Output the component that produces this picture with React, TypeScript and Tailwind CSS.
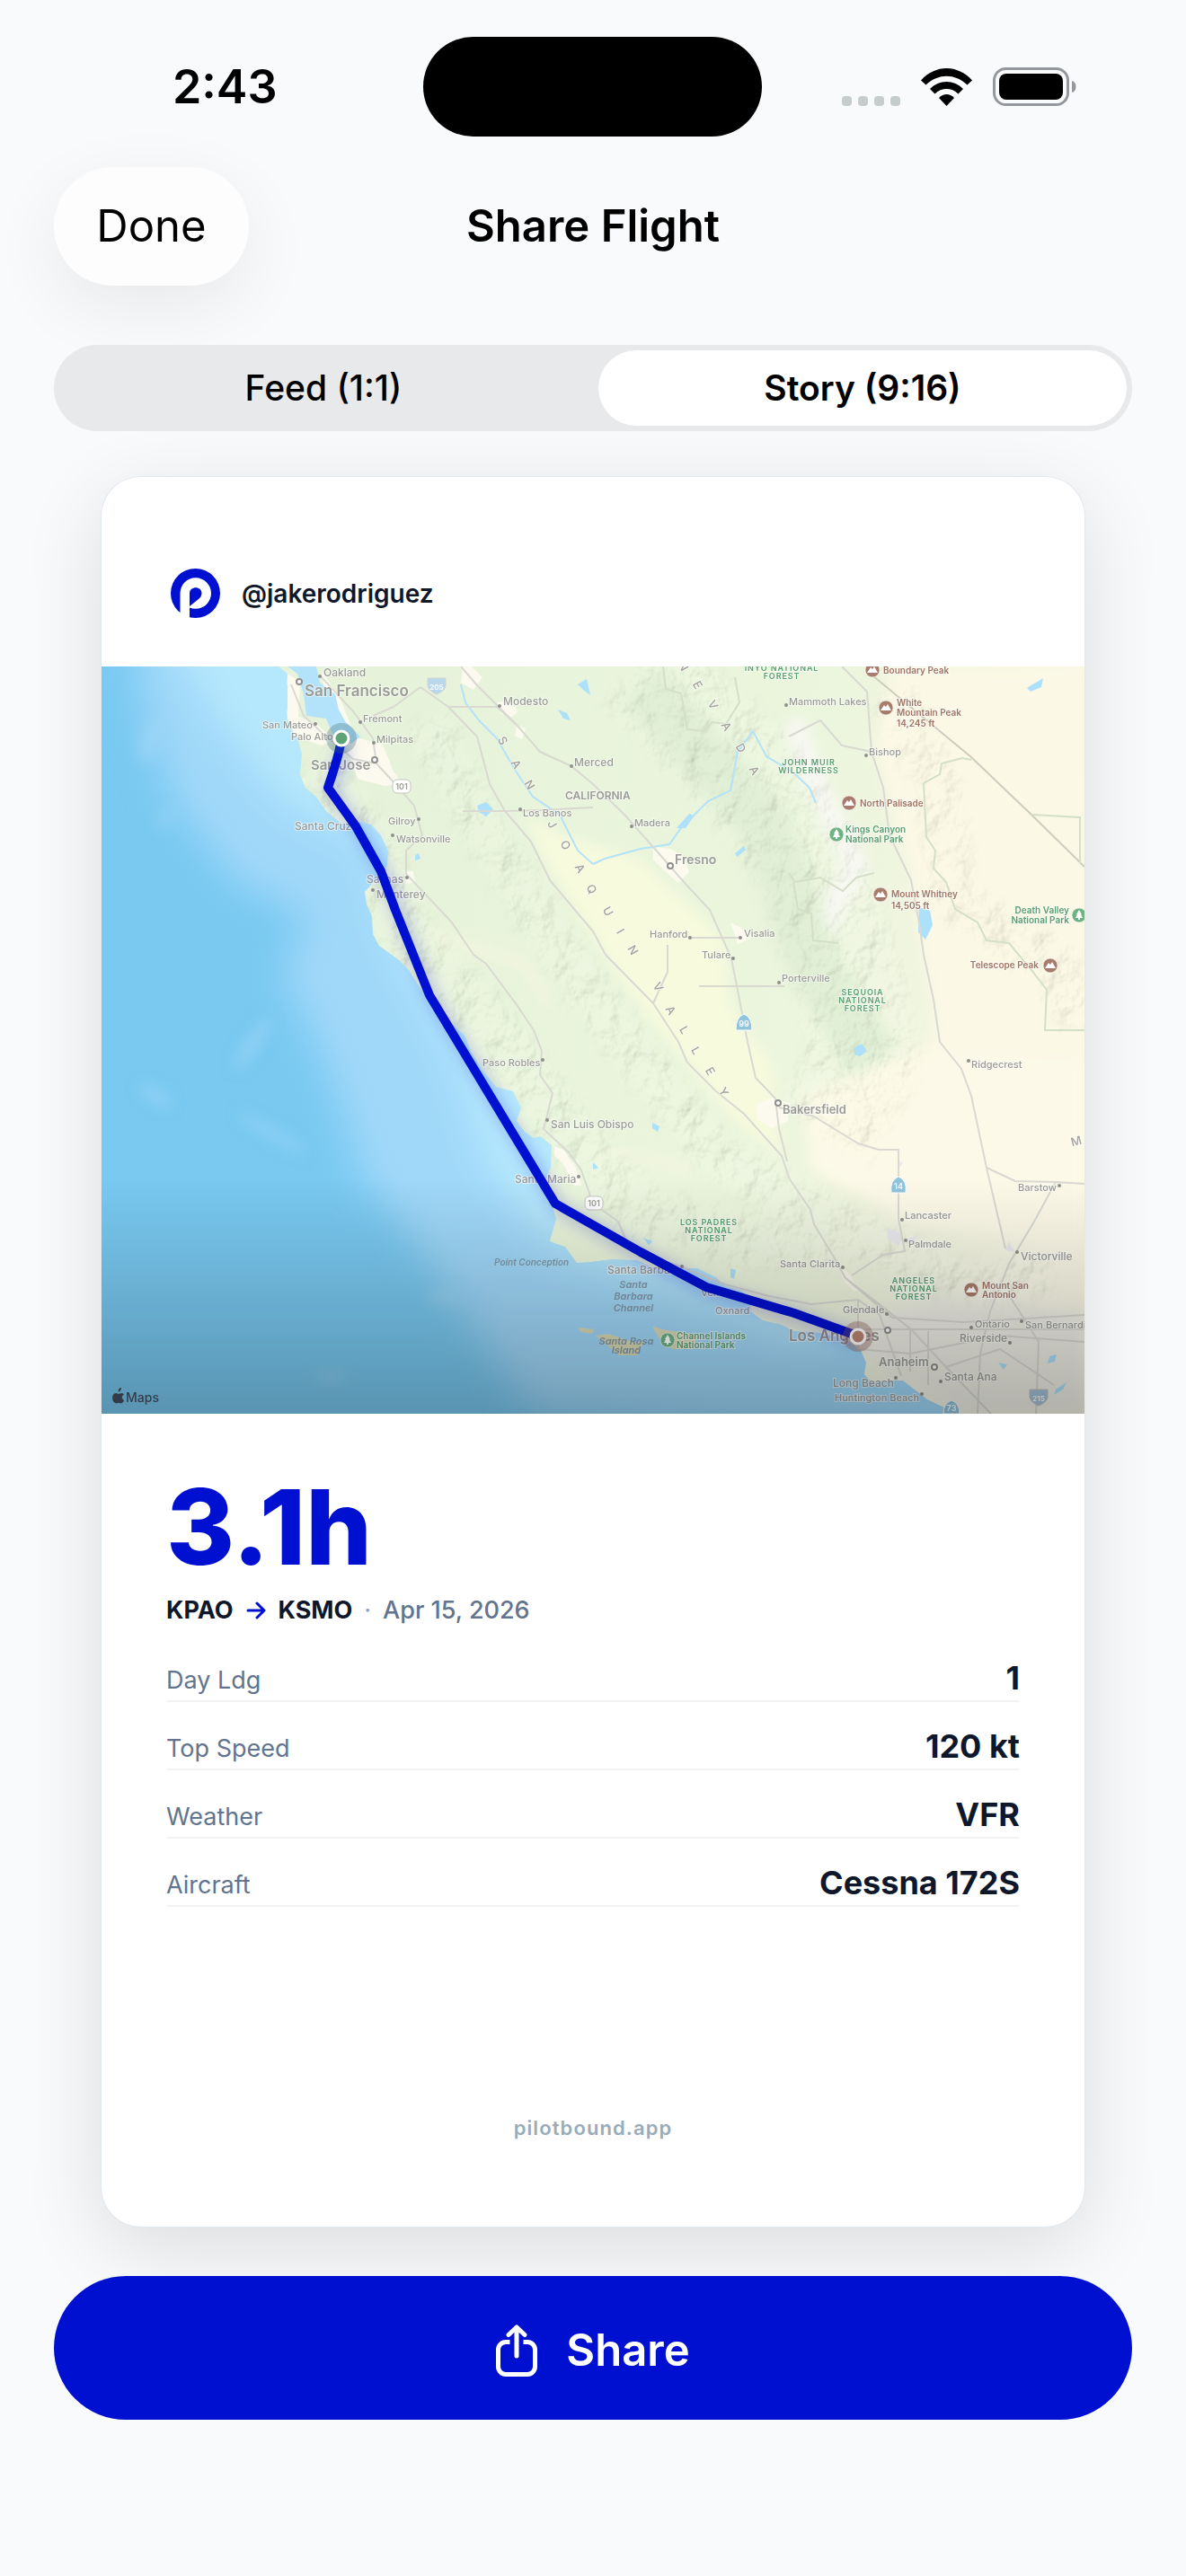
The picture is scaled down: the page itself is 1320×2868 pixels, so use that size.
import { FC, useState } from "react";

type LabelTone = "city" | "peak" | "park" | "sea";

type MapLabel = {
  text: string;
  x: number;
  y: number;
  size?: number;
  weight?: number;
  tone?: LabelTone;
  anchor?: "start" | "middle" | "end";
};

const COAST =
  "M197 0L207 8 206 18 211 31 206 51 207 61 216 71 223 98 221 121 227 135 239 145 250 161 267 175 288 173 300 176 311 188 319 205 318 221 313 231 302 241 293 251 295 265 301 278 302 298 309 311 330 326 342 338 355 358 369 375 383 391 404 411 411 428 423 448 439 468 458 473 467 491 462 506 471 518 481 525 488 523 501 533 500 558 495 571 499 591 506 615 499 640 516 646 529 664 544 663 568 660 596 661 617 671 642 670 663 670 684 680 694 690 712 695 724 705 722 718 736 728 757 733 771 740 793 741 817 746 831 751 845 761 851 775 849 788 856 796 873 795 892 795 905 805 919 816 940 826 950 832H1094V0Z";

const ROUTE =
  "M267 80C265 98 258 116 252 135L283 178 311 228 327 271 365 366 505 598 600 652 673 691 771 720 835 743 842 746";

const ROADS = [
  "M355 23L386 45 418 78 432 131 449 161 478 195 499 238 547 295 561 321 614 375 642 418 652 441 684 473 715 498 757 545 766 571 789 605 793 621 817 661 828 681 863 708 901 738 940 780 990 832",
  "M400 0L418 21 462 65 488 95 523 111 547 131 582 165 614 201 649 241 677 271 701 325 712 381 719 418 728 458 750 481 754 515 763 551",
  "M211 20L225 55 250 78 280 103 306 108 327 131 348 155 357 188 339 205 339 231 390 285 414 321 428 331 463 378 481 405 490 428 488 455 502 475 492 515 520 541 534 561 547 598 575 618 589 651 645 668 694 688 743 701 790 710 842 705 866 722",
  "M243 10L280 50 302 80 306 108M302 55L325 45 355 23M386 45H440L462 65M402 161H449L490 160 547 157",
  "M824 0L852 28 857 95 870 135 877 188 901 238 910 285 915 321 926 371 933 418 957 448 968 478 985 558 1006 648",
  "M754 491L793 501 842 531 865 538 887 538 887 615 894 651 870 655 835 678",
  "M1094 576L1062 574 1056 585 1038 618 1010 665 989 718 978 765 975 832M985 558L1017 573 1062 574",
  "M828 681L880 725 960 730 1094 722M842 705V760L900 765 1000 745 1094 752M866 722L890 790M900 738V785M920 740V800M850 738L1094 738M1010 700L1043 752 1040 832M940 780L1000 760 1060 800M765 78L800 60 824 88 857 95",
  "M657 302H712M719 356H760M665 356H719M630 310V340L614 375",
];

const LAKES = [
  "M910 268l12 4 3 16-8 16-8-8z",
  "M1040 18l8-5-2 10-12 5-4-4 6-4z",
  "M530 20l10-6 4 18-8-6z",
  "M418 155l10-4 8 8-8 8-8-5z",
  "M508 48l10 4 4 8-8-2z",
  "M640 180l14-16 6 2-10 14z",
  "M705 208l10-8 2 4-10 8z",
  "M838 424l8-4 6 8-8 6-6-2z",
  "M613 508l8 4-2 6-6-4z",
  "M349 210l4-2 2 6-6 2z",
  "M547 552l6 6-6 2zM700 670l6 2-2 10-4-2z",
  "M603 636l10 4-4 4zM998 775l10 2-4 6zM1055 768l8-2-2 8-8 2z",
  "M1062 805l12-8-4 8-10 6z",
];

const SPACED_LETTERS: [string, number, number, number][] = [
  ["S", 446, 83, 60],
  ["A", 461, 109, 60],
  ["N", 476, 132, 60],
  ["J", 501, 176, 60],
  ["O", 516, 199, 60],
  ["A", 532, 225, 60],
  ["Q", 545, 248, 60],
  ["U", 563, 273, 60],
  ["I", 577, 295, 60],
  ["N", 591, 316, 60],
  ["V", 619, 357, 60],
  ["A", 633, 383, 60],
  ["L", 648, 405, 60],
  ["L", 661, 428, 60],
  ["E", 677, 451, 60],
  ["Y", 692, 474, 60],
  ["N", 647, 0, 60],
  ["E", 663, 21, 60],
  ["V", 680, 43, 60],
  ["A", 695, 67, 60],
  ["D", 711, 91, 60],
  ["A", 726, 116, 60],
  ["M", 1085, 529, -15],
];

const LABELS: MapLabel[] = [
  { text: "Oakland", x: 247, y: 11 },
  { text: "San Francisco", x: 226, y: 33, size: 17, weight: 600 },
  { text: "Fremont", x: 291, y: 62, size: 11 },
  { text: "San Mateo", x: 179, y: 69, size: 11 },
  { text: "Palo Alto", x: 211, y: 82, size: 11 },
  { text: "Milpitas", x: 306, y: 85, size: 11 },
  { text: "San Jose", x: 233, y: 115, size: 15, weight: 600 },
  { text: "Modesto", x: 447, y: 43 },
  { text: "Merced", x: 526, y: 111 },
  { text: "Gilroy", x: 319, y: 176, size: 11 },
  { text: "Los Banos", x: 469, y: 167, size: 11 },
  { text: "Santa Cruz", x: 215, y: 182 },
  { text: "Watsonville", x: 328, y: 196, size: 11 },
  { text: "Salinas", x: 295, y: 241 },
  { text: "Monterey", x: 306, y: 258 },
  { text: "CALIFORNIA", x: 516, y: 148, weight: 600 },
  { text: "Madera", x: 593, y: 178, size: 11 },
  { text: "Fresno", x: 638, y: 220, size: 14, weight: 600 },
  { text: "Hanford", x: 610, y: 302, size: 11 },
  { text: "Visalia", x: 715, y: 301, size: 11 },
  { text: "Tulare", x: 668, y: 325, size: 11 },
  { text: "Porterville", x: 757, y: 351, size: 11 },
  { text: "Mammoth Lakes", x: 765, y: 43, size: 11 },
  { text: "Bishop", x: 854, y: 99, size: 11 },
  { text: "INYO NATIONAL", x: 757, y: 5, size: 9, tone: "park", anchor: "middle" },
  { text: "FOREST", x: 757, y: 14, size: 9, tone: "park", anchor: "middle" },
  { text: "JOHN MUIR", x: 787, y: 110, size: 9, tone: "park", anchor: "middle" },
  { text: "WILDERNESS", x: 787, y: 119, size: 9, tone: "park", anchor: "middle" },
  { text: "Boundary Peak", x: 870, y: 8, size: 10, tone: "peak" },
  { text: "White", x: 885, y: 44, size: 10, tone: "peak" },
  { text: "Mountain Peak", x: 885, y: 55, size: 10, tone: "peak" },
  { text: "14,245 ft", x: 885, y: 67, size: 10, tone: "peak" },
  { text: "North Palisade", x: 844, y: 156, size: 10, tone: "peak" },
  { text: "Kings Canyon", x: 828, y: 185, size: 10, tone: "park" },
  { text: "National Park", x: 828, y: 196, size: 10, tone: "park" },
  { text: "Mount Whitney", x: 879, y: 257, size: 10, tone: "peak" },
  { text: "14,505 ft", x: 879, y: 270, size: 10, tone: "peak" },
  { text: "Death Valley", x: 1077, y: 275, size: 10, tone: "park", anchor: "end" },
  { text: "National Park", x: 1077, y: 286, size: 10, tone: "park", anchor: "end" },
  { text: "Telescope Peak", x: 1043, y: 336, size: 10, tone: "peak", anchor: "end" },
  { text: "SEQUOIA", x: 847, y: 366, size: 9, tone: "park", anchor: "middle" },
  { text: "NATIONAL", x: 847, y: 375, size: 9, tone: "park", anchor: "middle" },
  { text: "FOREST", x: 847, y: 384, size: 9, tone: "park", anchor: "middle" },
  { text: "Paso Robles", x: 424, y: 445, size: 11 },
  { text: "San Luis Obispo", x: 500, y: 514, size: 12 },
  { text: "Santa Maria", x: 460, y: 575 },
  { text: "Bakersfield", x: 758, y: 498, size: 13, weight: 600 },
  { text: "Ridgecrest", x: 968, y: 447, size: 11 },
  { text: "Barstow", x: 1020, y: 584, size: 11 },
  { text: "Lancaster", x: 894, y: 615, size: 11 },
  { text: "Palmdale", x: 898, y: 647, size: 11 },
  { text: "Victorville", x: 1023, y: 661 },
  { text: "Santa Clarita", x: 755, y: 669, size: 11 },
  { text: "LOS PADRES", x: 676, y: 622, size: 9, tone: "park", anchor: "middle" },
  { text: "NATIONAL", x: 676, y: 631, size: 9, tone: "park", anchor: "middle" },
  { text: "FOREST", x: 676, y: 640, size: 9, tone: "park", anchor: "middle" },
  { text: "Santa Barbara", x: 563, y: 676 },
  { text: "Ventura", x: 667, y: 701, size: 11 },
  { text: "Oxnard", x: 683, y: 721, size: 11 },
  { text: "Point Conception", x: 437, y: 667, size: 10, tone: "sea" },
  { text: "Santa", x: 592, y: 692, size: 11, tone: "sea", anchor: "middle" },
  { text: "Barbara", x: 592, y: 705, size: 11, tone: "sea", anchor: "middle" },
  { text: "Channel", x: 592, y: 718, size: 11, tone: "sea", anchor: "middle" },
  { text: "Santa Rosa", x: 584, y: 755, size: 11, tone: "sea", anchor: "middle" },
  { text: "Island", x: 584, y: 765, size: 11, tone: "sea", anchor: "middle" },
  { text: "Channel Islands", x: 640, y: 749, size: 10, tone: "park" },
  { text: "National Park", x: 640, y: 759, size: 10, tone: "park" },
  { text: "Los Angeles", x: 765, y: 751, size: 17, weight: 600 },
  { text: "Glendale", x: 825, y: 720, size: 11 },
  { text: "ANGELES", x: 904, y: 687, size: 9, tone: "park", anchor: "middle" },
  { text: "NATIONAL", x: 904, y: 696, size: 9, tone: "park", anchor: "middle" },
  { text: "FOREST", x: 904, y: 705, size: 9, tone: "park", anchor: "middle" },
  { text: "Mount San", x: 980, y: 693, size: 10, tone: "peak" },
  { text: "Antonio", x: 980, y: 703, size: 10, tone: "peak" },
  { text: "Ontario", x: 972, y: 736, size: 11 },
  { text: "San Bernardino", x: 1028, y: 737, size: 11 },
  { text: "Riverside", x: 955, y: 752 },
  { text: "Anaheim", x: 865, y: 779, size: 13, weight: 600 },
  { text: "Santa Ana", x: 938, y: 795 },
  { text: "Long Beach", x: 814, y: 802 },
  { text: "Huntington Beach", x: 816, y: 818, size: 11 },
];

const TOWN_DOTS: [number, number][] = [
  [243, 11],
  [288, 62],
  [238, 64],
  [303, 85],
  [443, 44],
  [353, 170],
  [324, 188],
  [340, 235],
  [302, 249],
  [466, 159],
  [523, 111],
  [590, 178],
  [655, 302],
  [711, 302],
  [703, 325],
  [754, 352],
  [762, 43],
  [851, 99],
  [491, 438],
  [496, 505],
  [531, 568],
  [965, 439],
  [1066, 578],
  [891, 616],
  [895, 639],
  [1019, 652],
  [825, 669],
  [646, 668],
  [874, 721],
  [968, 736],
  [1024, 729],
  [1011, 753],
  [934, 796],
  [884, 792],
  [913, 810],
];

const CITY_RINGS: [number, number][] = [
  [220, 17],
  [304, 104],
  [633, 222],
  [753, 486],
  [875, 739],
  [927, 780],
];

const PEAKS: [number, number][] = [
  [858, 4],
  [873, 46],
  [832, 152],
  [867, 254],
  [1056, 333],
  [968, 694],
];

const PARKS: [number, number][] = [
  [818, 187],
  [1088, 277],
  [630, 750],
];

const TONE_FILL: Record<LabelTone, string> = {
  city: "#9b9b96",
  peak: "#a17565",
  park: "#57a070",
  sea: "#8297a8",
};

const FlightMap: FC = () => (
  <svg
    viewBox="0 0 1094 832"
    className="block w-full"
    role="img"
    aria-label="Flight track from Palo Alto to Santa Monica"
  >
    <defs>
      <linearGradient id="shade" x1="0" y1="570" x2="0" y2="832" gradientUnits="userSpaceOnUse">
        <stop offset="0" stopColor="#000" stopOpacity="0" />
        <stop offset="1" stopColor="#000" stopOpacity="0.26" />
      </linearGradient>
      <linearGradient id="land" x1="300" y1="300" x2="1094" y2="420" gradientUnits="userSpaceOnUse">
        <stop offset="0" stopColor="#e6f3da" />
        <stop offset="0.5" stopColor="#eaf5dc" />
        <stop offset="0.72" stopColor="#eff5df" />
        <stop offset="1" stopColor="#faf8e7" />
      </linearGradient>
      <filter id="blurL" x="-30%" y="-30%" width="160%" height="160%">
        <feGaussianBlur stdDeviation="22" />
      </filter>
      <filter id="blurS" x="-30%" y="-30%" width="160%" height="160%">
        <feGaussianBlur stdDeviation="8" />
      </filter>
      <filter id="relief" x="0" y="0" width="100%" height="100%">
        <feTurbulence type="fractalNoise" baseFrequency="0.035 0.028" numOctaves="4" seed="7" />
        <feColorMatrix values="0 0 0 0 0 0 0 0 0 0 0 0 0 0 0 1 0 0 0 0" />
        <feDiffuseLighting surfaceScale="12" diffuseConstant="1.2" lightingColor="#f6fff0">
          <feDistantLight azimuth="225" elevation="55" />
        </feDiffuseLighting>
      </filter>
      <clipPath id="landClip">
        <path d={COAST} />
      </clipPath>
      <mask id="hills">
        <g filter="url(#blurS)" fill="none" stroke="#fff" strokeLinejoin="round">
          <path d="M235 110L300 210 340 300 440 410 520 520 600 610 720 640 830 640" strokeWidth="60" />
          <path d="M360 60L430 190 520 330 590 430 680 540 780 600 960 690 1060 680" strokeWidth="50" />
          <path d="M600 0L720 120 790 220 830 340 850 440 800 520" strokeWidth="120" />
          <path d="M880 30L930 130 950 260 1060 330 1094 400" strokeWidth="50" />
        </g>
      </mask>
    </defs>

    <rect width="1094" height="832" fill="#79c9f1" />
    <g filter="url(#blurL)">
      <path
        d="M30 -60L50 60 80 150 150 240 230 280 200 340 240 420 270 500 290 570 350 640 390 700 480 832 1000 870V-60Z"
        fill="#a0d8f9"
      />
      <path
        d="M60 -60L130 60 200 150 300 200 320 300 390 430 430 560 500 650 700 720 800 760V-60Z"
        fill="#b6e8fd"
      />
    </g>
    <g filter="url(#blurS)" fill="#9dd6f6" fillOpacity="0.7">
      <ellipse cx="56" cy="80" rx="12" ry="28" transform="rotate(20 56 80)" />
      <ellipse cx="72" cy="168" rx="6" ry="14" transform="rotate(30 72 168)" />
      <ellipse cx="168" cy="420" rx="7" ry="34" transform="rotate(35 168 420)" />
      <ellipse cx="60" cy="478" rx="20" ry="7" transform="rotate(30 60 478)" />
      <ellipse cx="190" cy="520" rx="44" ry="5" transform="rotate(30 190 520)" />
      <ellipse cx="385" cy="702" rx="22" ry="7" />
      <ellipse cx="255" cy="792" rx="18" ry="5" />
    </g>

    <path d={COAST} fill="url(#land)" />
    <g clipPath="url(#landClip)">
      <g filter="url(#blurS)">
        <path d="M470 165L520 190 600 215 690 300 700 380 745 440 755 545 700 500 600 380 540 290 490 210Z" fill="#f7fadd" />
        <path d="M860 90L900 230 930 400 880 500 900 560 1094 600V0H880Z" fill="#fbf8e6" />
        <path d="M780 480L900 430 1094 440V650L900 620 790 560Z" fill="#fcf9e8" />
        <path d="M770 60L800 140 840 220 800 300" stroke="#f8f8f3" strokeWidth="24" fill="none" />
        <path d="M600 20L740 180 790 330 860 440" stroke="#e1efd6" strokeWidth="60" fill="none" />
        <path d="M370 300L470 330 500 380M560 540L660 560" stroke="#f3f5de" strokeWidth="14" fill="none" />
        <path d="M820 740L880 790 960 832H1094V720L930 700Z" fill="#efefe6" />
      </g>
      <g mask="url(#hills)" className="opacity-15 mix-blend-multiply">
        <rect width="1094" height="832" filter="url(#relief)" />
      </g>
    </g>
    <g fill="#fcfaee">
      <path d="M207 8l14 8-2 40 20 8 20 18-14 6-30-10-8-20zM245 5l20 30 18 44 30 8 12 30 10 14-20 2-30-8-10-30-25-50z" />
      <path d="M614 201l20 2 14 10 6 16-12 12-16-14-12-12zM728 488l18-8 20 6-2 20-18 8-16-10zM402 0h10l12 12-10 14-14-8zM440 40l14-2 10 12-10 8-10-6zM462 65l10 4-4 12-8-4z" />
      <path d="M337 228l10 0 2 12-10 2zM504 534l10 4 14 20 6 20-8 0-12-24-10-10zM822 670l8 4 14 20-6 2-12-12zM700 285l12 6 10 12-14 6z" />
    </g>
    <g fill="#e9e9ef">
      <path d="M874 625l16 6-2 14-12-6zM894 638l14-4-6 10zM886 549l6 4-4 5zM1010 640l6 12-10-2z" />
    </g>
    <path
      d="M225 31L218 8 207 0H239L243 18 260 31 264 48 271 61 288 78 278 86 257 75 250 58 228 55Z"
      fill="#b3e3fb"
    />
    <path
      d="M530 736l18 2-2 5-12-2zM613 734l10 4 40 6-4 16-24 0-16-14zM550 745l14-2 30 10 10-2-8 16-20 0z"
      fill="#d8d9b4"
    />
    {LAKES.map((d) => (
      <path key={d} d={d} fill="#ace0fb" />
    ))}
    <path
      d="M547 220L560 214 600 203 632 198 645 180 675 150 700 138 708 95 725 72 740 100 770 118 788 135 795 152M400 20L405 40 420 60 440 80 460 115 480 145 510 165 530 205 547 220"
      fill="none"
      stroke="#b4e2f8"
      strokeWidth="2"
    />
    <g fill="none" stroke="#d9d9d2" strokeWidth="2" strokeLinejoin="round">
      {ROADS.map((d) => (
        <path key={d} d={d} />
      ))}
    </g>
    <path d="M852 5L968 101 1035 165 1094 223" fill="none" stroke="#cdcdbf" strokeWidth="2" />
    <path
      d="M915 130L933 120 935 108 958 102 968 104M915 130L918 190 928 205 926 225 940 240 950 270 975 285 985 305 1010 308 1035 338 1052 360 1050 405H1094M1035 165L1089 168V220M625 0L628 25 645 30 652 70 670 72 680 62 695 64 710 40 705 12M765 230L772 240 800 235 825 250 840 235 860 230M770 240L775 270 790 275 792 305 820 308"
      fill="none"
      stroke="#d3dfc8"
      strokeWidth="2"
    />

    <g fill="#8f8f8b">
      {TOWN_DOTS.map(([x, y]) => (
        <circle key={`${x}-${y}`} cx={x} cy={y} r="2" />
      ))}
    </g>
    <g fill="#fff" stroke="#8f8f8b" strokeWidth="2">
      {CITY_RINGS.map(([x, y]) => (
        <circle key={`${x}-${y}`} cx={x} cy={y} r="3" />
      ))}
    </g>

    <g fontFamily="Inter, sans-serif" stroke="#fff" strokeOpacity="0.55" strokeWidth="2" paintOrder="stroke">
      {LABELS.map((l) => {
        const tone = l.tone ?? "city";
        return (
          <text
            key={`${l.text}-${l.x}-${l.y}`}
            x={l.x}
            y={l.y}
            fontSize={l.size ?? 12}
            fontWeight={l.weight ?? (tone === "city" ? 500 : 600)}
            fontStyle={tone === "sea" ? "italic" : "normal"}
            textAnchor={l.anchor ?? "start"}
            fill={TONE_FILL[tone]}
            strokeOpacity={tone === "sea" ? 0 : 0.55}
            className={l.size === 9 ? "tracking-widest" : undefined}
          >
            {l.text}
          </text>
        );
      })}
      {SPACED_LETTERS.map(([ch, x, y, angle]) => (
        <text
          key={`${ch}-${x}`}
          fontSize="13"
          fontWeight="500"
          fill="#a3a39c"
          textAnchor="middle"
          transform={`translate(${x} ${y}) rotate(${angle}) translate(0 4)`}
        >
          {ch}
        </text>
      ))}
    </g>

    {PEAKS.map(([x, y]) => (
      <g key={`${x}-${y}`} transform={`translate(${x} ${y})`}>
        <circle r="8" fill="#a87c6c" stroke="#fff" strokeOpacity="0.6" />
        <path d="M-6 3L-2 -3 0 -1 2 -4 6 3Z" fill="#fff" />
      </g>
    ))}
    {PARKS.map(([x, y]) => (
      <g key={`${x}-${y}`} transform={`translate(${x} ${y})`}>
        <circle r="8" fill="#6db384" stroke="#fff" strokeOpacity="0.6" />
        <path d="M0 -6L3 -1H2L4 3H1V5H-1V3H-4L-2 -1H-3Z" fill="#fff" />
      </g>
    ))}

    <g fontFamily="Inter, sans-serif" fontWeight="600" fontSize="9" textAnchor="middle">
      <rect x="324" y="126" width="20" height="15" rx="5" fill="#fff" stroke="#c4c4bf" />
      <text x="334" y="137" fill="#9b9b96">101</text>
      <rect x="538" y="590" width="20" height="15" rx="5" fill="#fff" stroke="#c4c4bf" />
      <text x="548" y="601" fill="#9b9b96">101</text>
      <path d="M363 13H383V22Q381 28 373 31 365 28 363 22Z" fill="#b9d8ee" stroke="#d4d4cf" />
      <text x="373" y="26" fontSize="8" fill="#fff">205</text>
      <path d="M706 405Q706 390 715 387 724 390 724 405Z" fill="#8fc4dc" stroke="#fff" />
      <text x="715" y="401" fill="#fff">99</text>
      <path d="M879 586Q877 572 887 568 897 572 895 586Z" fill="#8fc4dc" stroke="#fff" />
      <text x="887" y="582" fill="#fff">14</text>
      <path d="M1033 805H1053V814Q1051 820 1043 823 1035 820 1033 814Z" fill="#a3c1d8" stroke="#c4c4bf" />
      <text x="1043" y="818" fontSize="8" fill="#fff">215</text>
      <path d="M937 832Q937 820 946 817 955 820 955 832Z" fill="#8fc4dc" stroke="#fff" />
      <text x="946" y="829" fill="#fff">73</text>
    </g>

    <path
      d={ROUTE}
      fill="none"
      stroke="#0010d0"
      strokeOpacity="0.22"
      strokeWidth="14"
      filter="url(#blurS)"
      transform="translate(4 4)"
    />
    <path d={ROUTE} fill="none" stroke="#0010d0" strokeWidth="10" strokeLinejoin="round" />
    <circle cx="267" cy="80" r="17" fill="#3c6a70" fillOpacity="0.3" />
    <circle cx="267" cy="80" r="8" fill="#5fa275" stroke="#fff" strokeWidth="3" />
    <circle cx="842" cy="746" r="17" fill="#8d5a50" fillOpacity="0.35" />
    <circle cx="842" cy="746" r="8" fill="#bb8572" stroke="#fff" strokeWidth="3" />

    <rect width="1094" height="832" fill="url(#shade)" />
    <path
      d="M19 808c1-1 3-2 3-5-2 0-4 2-3 5zm4 1c-2 0-3 1-4 1s-2-1-3-1c-5 0-5 9-1 11 1 1 3 0 4 0s3 1 4 0 2-2 2-3c-3-2-3-5 0-6-1-1-1-2-2-2z"
      fill="#333a48"
    />
    <text x="27" y="819" fontFamily="Inter, sans-serif" fontSize="14" fontWeight="500" fill="#333a48">
      Maps
    </text>
  </svg>
);

const StatusBar: FC = () => (
  <div className="flex items-center pt-[41px]">
    <div className="flex flex-1 justify-center pl-[30px] text-[52px] leading-[60px] font-semibold">
      2:43
    </div>
    <div className="h-[111px] w-[377px] rounded-full bg-black" />
    <div className="flex flex-1 items-center justify-center pr-[32px]">
      <div className="flex h-[42px] items-end gap-[7px]">
        <span className="size-[11px] rounded-[4px] bg-[#c5cccb]" />
        <span className="size-[11px] rounded-[4px] bg-[#c5cccb]" />
        <span className="size-[11px] rounded-[4px] bg-[#c5cccb]" />
        <span className="size-[11px] rounded-[4px] bg-[#c5cccb]" />
      </div>
      <svg viewBox="0 0 57 42" className="ml-[23px] h-[42px] w-[57px]" aria-hidden="true">
        <path d="M0 13.5C16-4.5 41-4.5 57 13.5L51.5 18.5C38 5.4 19 5.4 5.5 18.5Z" />
        <path d="M10 23C20 12.3 37 12.3 47 23L41.5 28.5C34 21.2 23 21.2 15.5 28.5Z" />
        <path d="M20 33C25 27.7 32 27.7 37 33L28.5 42Z" />
      </svg>
      <svg viewBox="0 0 94 43" className="ml-[23px] h-[43px] w-[94px]" aria-hidden="true">
        <rect x="1.5" y="1.5" width="82" height="40" rx="13" fill="none" stroke="#94979c" strokeWidth="3" />
        <rect x="7" y="7" width="71" height="29" rx="8" />
        <path d="M88 15c6 1 6 12 0 13z" fill="#94979c" />
      </svg>
    </div>
  </div>
);

const Logo: FC = () => (
  <svg viewBox="0 0 55 55" className="size-[55px]" aria-hidden="true">
    <circle cx="27.5" cy="27.5" r="27.5" fill="#0010d0" />
    <path d="M10.5 55V27.5A17.25 17.25 0 1 1 27.5 44.8Q24 44.8 21 43.5V55Z" fill="#fff" />
    <path d="M21 27.5C21 19 34.5 19 34.5 27.5 34.5 30 33 32.5 31 34L21 42Z" fill="#0010d0" />
  </svg>
);

const stats = [
  { label: "Day Ldg", value: "1" },
  { label: "Top Speed", value: "120 kt" },
  { label: "Weather", value: "VFR" },
  { label: "Aircraft", value: "Cessna 172S" },
];

const formats = [
  { id: "feed", label: "Feed (1:1)" },
  { id: "story", label: "Story (9:16)" },
];

const App: FC = () => {
  const [format, setFormat] = useState("story");

  return (
    <div className="min-h-screen bg-[#f9fafc] pb-[174px] font-['Inter',sans-serif] text-black">
      <StatusBar />

      <header className="mt-[34px] grid grid-cols-3 items-center px-[60px]">
        <button
          type="button"
          className="h-[132px] w-[217px] rounded-full bg-[#fdfdfe] text-[49px] shadow-[0_24px_80px_rgba(0,0,0,0.07)]"
        >
          Done
        </button>
        <h1 className="text-center text-[49px] font-semibold whitespace-nowrap">Share Flight</h1>
      </header>

      <div className="relative mx-[60px] mt-[66px] grid grid-cols-2 gap-[12px] rounded-full bg-[#e8e9ea] p-[6px]">
        {formats.map((f) => (
          <button
            key={f.id}
            type="button"
            aria-pressed={format === f.id}
            onClick={() => setFormat(f.id)}
            className={
              format === f.id
                ? "h-[84px] rounded-full bg-white text-[39px] font-semibold"
                : "h-[84px] rounded-full text-[39px] font-medium"
            }
          >
            {f.label}
          </button>
        ))}
      </div>

      <main className="mx-[113px] mt-[51px] overflow-hidden rounded-[44px] bg-white shadow-[0_24px_90px_rgba(0,0,0,0.12)] ring-1 ring-slate-200">
        <div className="flex items-center gap-6 px-[77px] pt-[102px] pb-[54px]">
          <Logo />
          <span className="text-[28px] font-semibold text-slate-900">@jakerodriguez</span>
        </div>

        <FlightMap />

        <div className="px-[72px] pt-[68px] pb-[94px]">
          <p className="text-[116px] leading-[116px] font-extrabold text-[#0010d0]">3.1h</p>
          <div className="mt-[15px] flex items-center text-[27px] leading-[40px]">
            <span className="font-bold text-slate-900">KPAO</span>
            <svg
              viewBox="0 0 22 20"
              className="mx-[14px] h-[20px] w-[22px]"
              fill="none"
              stroke="#0010d0"
              strokeWidth="3"
              strokeLinecap="round"
              strokeLinejoin="round"
              aria-hidden="true"
            >
              <path d="M2 10H20M12 2L20 10 12 18" />
            </svg>
            <span className="font-bold text-slate-900">KSMO</span>
            <span className="mx-[13px] text-slate-400">·</span>
            <span className="font-medium text-slate-500">Apr 15, 2026</span>
          </div>

          <dl className="mt-[6px]">
            {stats.map((s) => (
              <div
                key={s.label}
                className="flex h-[76px] items-end justify-between border-b-2 border-[#f1f2f4] pb-px"
              >
                <dt className="text-[27px] leading-[42px] text-slate-500">{s.label}</dt>
                <dd className="text-[36px] leading-[48px] font-bold text-slate-900">{s.value}</dd>
              </div>
            ))}
          </dl>

          <p className="mt-[230px] text-center text-[22px] leading-[32px] font-semibold tracking-wider text-[#9aabba]">
            pilotbound.app
          </p>
        </div>
      </main>

      <div className="relative mt-[55px] px-[60px]">
        <button
          type="button"
          className="flex h-[160px] w-full items-center justify-center gap-[32px] rounded-full bg-[#0010d0] pt-[6px] text-[49px] font-semibold text-white"
        >
          <svg
            viewBox="0 0 46 58"
            className="h-[58px] w-[46px]"
            fill="none"
            stroke="currentColor"
            strokeWidth="5"
            strokeLinecap="round"
            strokeLinejoin="round"
            aria-hidden="true"
          >
            <path
              d="M15.5 19.5H11A8.5 8.5 0 0 0 2.5 28v19A8.5 8.5 0 0 0 11 55.5h24a8.5 8.5 0 0 0 8.5-8.5V28a8.5 8.5 0 0 0-8.5-8.5h-4.5"
              strokeLinecap="butt"
            />
            <path d="M23 35V3M14 11.5L23 3l9 8.5" />
          </svg>
          Share
        </button>
      </div>
    </div>
  );
};

export default App;
